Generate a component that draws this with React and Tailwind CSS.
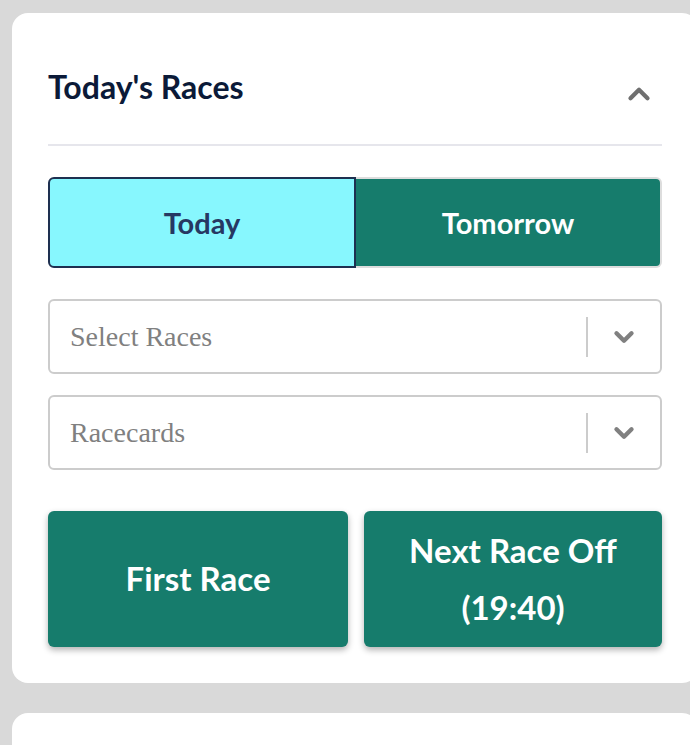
import { ChevronUp, ChevronDown } from 'lucide-react';

const selects = ['Select Races', 'Racecards'];

function SelectBox({ placeholder }) {
    return (
        <div className="h-[75px] flex items-center border-2 border-[#cccccc] rounded-md bg-white">
            <span className="flex-1 pl-[20px] text-[28px] text-[#808080] font-['Liberation_Serif',serif]">
                {placeholder}
            </span>
            <div className="w-[2px] h-[40px] bg-[#cccccc]" />
            <div className="w-[72px] flex items-center justify-center text-[#808080]">
                <ChevronDown size={30} strokeWidth={3.5} />
            </div>
        </div>
    );
}

export default function App() {
    return (
        <div className="min-h-[745px] w-[690px] overflow-hidden bg-[#d9d9d9] pt-[13px] pl-[12px] font-['Lato',sans-serif]">
            <div className="w-[686px] bg-white rounded-2xl px-[36px] pt-[26px] pb-[36px]">
                {/* Header */}
                <div className="flex items-center justify-between pt-[45px] pb-[38px] border-b-2 border-[#e6e6ec] h-[107px]">
                    <h2 className="text-[32px] font-bold text-[#0b1a38] leading-none -mt-[16px]">Today's Races</h2>
                    <ChevronUp size={34} strokeWidth={3} className="text-[#707070] mr-[6px] -mt-[2px]" />
                </div>

                {/* Day toggle */}
                <div className="flex mt-[31px] h-[91px]">
                    <button className="flex-1 bg-[#87f7fe] border-2 border-[#1e3050] rounded-l-md text-[29px] font-bold text-[#263862]">
                        Today
                    </button>
                    <button className="flex-1 bg-[#167c6c] border-2 border-l-0 border-[#dddddd] rounded-r-md text-[29px] font-bold text-white">
                        Tomorrow
                    </button>
                </div>

                {/* Selects */}
                <div className="flex flex-col gap-[21px] mt-[31px]">
                    {selects.map((s) => (
                        <SelectBox key={s} placeholder={s} />
                    ))}
                </div>

                {/* Actions */}
                <div className="flex gap-[16px] mt-[41px]">
                    <button className="w-[300px] h-[136px] bg-[#167c6c] rounded-md shadow-[0_3px_6px_rgba(0,0,0,0.3)] text-white text-[33px] font-bold">
                        First Race
                    </button>
                    <button className="flex-1 h-[136px] bg-[#167c6c] rounded-md shadow-[0_3px_6px_rgba(0,0,0,0.3)] text-white text-[33px] font-bold leading-[57px]">
                        Next Race Off<br />(19:40)
                    </button>
                </div>
            </div>

            <div className="w-[686px] h-[60px] bg-white rounded-2xl mt-[30px]" />
        </div>
    );
}
